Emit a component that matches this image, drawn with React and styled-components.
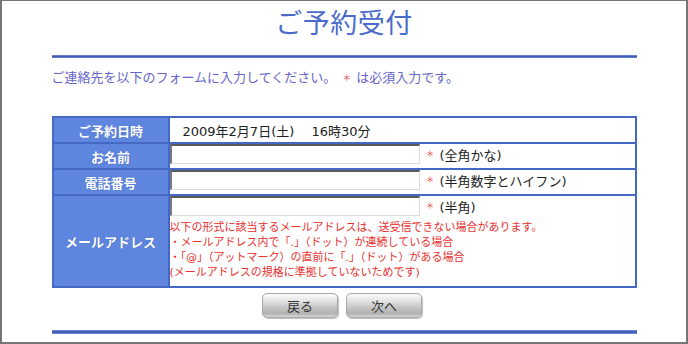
import React from "react";
import styled, { createGlobalStyle } from "styled-components";

const FONT = `"DejaVu Sans", "Noto Sans CJK JP", sans-serif`;

const Global = createGlobalStyle`
  html, body { margin: 0; padding: 0; background: #fff; }
  body { font-family: ${FONT}; }
`;

const Frame = styled.div`
  box-sizing: border-box;
  width: 688px;
  height: 344px;
  border: 2px solid #767676;
  border-top-width: 1px;
  display: flex;
  flex-direction: column;
  align-items: center;
  padding-top: 5px;
  overflow: hidden;
`;

const Title = styled.h1`
  margin: 0;
  font-family: "Noto Sans CJK JP", sans-serif;
  font-size: 27px;
  line-height: 32px;
  font-weight: 400;
  color: #4b6bcb;
  letter-spacing: 0.5px;
`;

const Rule = styled.div`
  width: 585px;
  height: ${(p) => p.$h || 3}px;
  margin-top: ${(p) => p.$mt}px;
  background: linear-gradient(#7f95dc, #3f5db6 40%, #3f5db6 70%, #8ea2e2);
`;

const Intro = styled.p`
  width: 585px;
  margin: 10px 0 0;
  font-size: 13px;
  line-height: 20px;
  color: #6565c9;
`;

const Mark = styled.span`
  color: #e84a4a;
  font-family: "Noto Sans CJK JP", sans-serif;
  font-size: 9px;
  margin: 0 5px 0 6px;
  position: relative;
  top: -1px;
`;

const Table = styled.table`
  width: 585px;
  margin-top: 27px;
  border-collapse: collapse;
  table-layout: fixed;
  td, th {
    border: 2px solid #4567c6;
    padding: 0;
  }
`;

const Head = styled.th`
  width: 114px;
  height: ${(p) => p.$h}px;
  background: #5f86de;
  color: #fff;
  font-size: 13px;
  font-weight: 700;
  text-align: center;
  vertical-align: middle;
  text-shadow: 0 0 1px #3c5ab0;
`;

const Cell = styled.td`
  height: ${(p) => p.$h}px;
  background: #fff;
  vertical-align: ${(p) => (p.$top ? "top" : "middle")};
  font-size: 13px;
  color: #222;
  padding-left: ${(p) => p.$pl || 0}px !important;
`;

const FieldLine = styled.div`
  display: flex;
  align-items: center;
  height: 20px;
  font-size: 13px;
  color: #222;
`;

const Input = styled.input`
  box-sizing: border-box;
  width: 250px;
  height: 20px;
  margin: 0;
  padding: 0 2px;
  border-style: solid;
  border-width: 2px 1px 1px 2px;
  border-color: #5a5a5a #dcdcdc #dcdcdc #7a7a7a;
  background: #fff;
  font: inherit;
`;

const Notes = styled.div`
  padding-top: 4px;
  font-size: 11px;
  line-height: 15px;
  color: #e8302e;
  white-space: nowrap;
`;

const Buttons = styled.div`
  display: flex;
  gap: 8px;
  margin-top: 5px;
  margin-left: -4px;
`;

const Button = styled.button`
  box-sizing: border-box;
  width: 76px;
  height: 25px;
  border: 1px solid #a8a8a8;
  border-radius: 5px;
  background: linear-gradient(#fbfbfb 0%, #e4e4e4 30%, #c3c3c3 60%, #b2b2b2 85%, #d8d8d8 100%);
  box-shadow: 1px 1px 1px rgba(0, 0, 0, 0.25);
  font-family: ${FONT};
  font-size: 13px;
  color: #333;
  padding: 0;
  cursor: pointer;
`;

export default function App() {
  return (
    <>
      <Global />
      <Frame>
        <Title>ご予約受付</Title>
        <Rule $mt={17} $h={3} />
        <Intro>
          ご連絡先を以下のフォームに入力してください。<Mark>＊</Mark>は必須入力です。
        </Intro>
        <Table>
          <tbody>
            <tr>
              <Head $h={24}>ご予約日時</Head>
              <Cell $h={24} $pl={13}>2009年2月7日(土)　 16時30分</Cell>
            </tr>
            <tr>
              <Head $h={24}>お名前</Head>
              <Cell $h={24} $top>
                <FieldLine>
                  <Input type="text" />
                  <Mark>＊</Mark>(全角かな)
                </FieldLine>
              </Cell>
            </tr>
            <tr>
              <Head $h={24}>電話番号</Head>
              <Cell $h={24} $top>
                <FieldLine>
                  <Input type="text" />
                  <Mark>＊</Mark>(半角数字とハイフン)
                </FieldLine>
              </Cell>
            </tr>
            <tr>
              <Head $h={90}>メールアドレス</Head>
              <Cell $h={90} $top>
                <FieldLine>
                  <Input type="text" />
                  <Mark>＊</Mark>(半角)
                </FieldLine>
                <Notes>
                  以下の形式に該当するメールアドレスは、送受信できない場合があります。
                  <br />
                  ・メールアドレス内で「.」（ドット）が連続している場合
                  <br />
                  ・「@」（アットマーク）の直前に「.」（ドット）がある場合
                  <br />
                  (メールアドレスの規格に準拠していないためです)
                </Notes>
              </Cell>
            </tr>
          </tbody>
        </Table>
        <Buttons>
          <Button type="button">戻る</Button>
          <Button type="button">次へ</Button>
        </Buttons>
        <Rule $mt={12} $h={4} />
      </Frame>
    </>
  );
}
